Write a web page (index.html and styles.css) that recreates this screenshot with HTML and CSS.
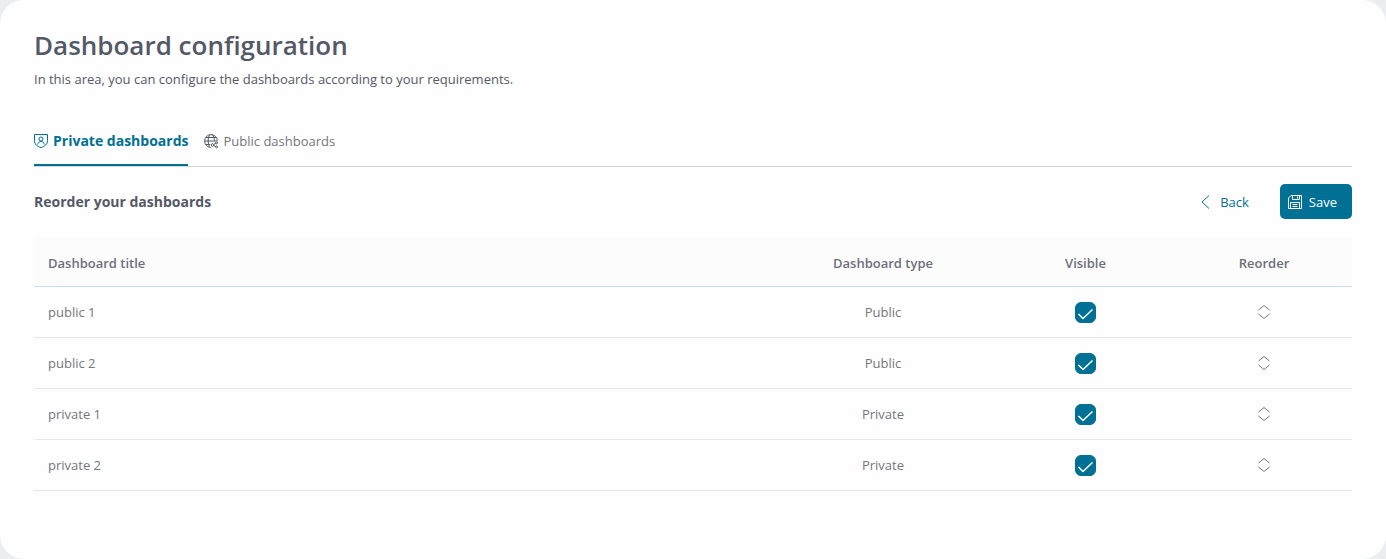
FILE: index.html
```html
<!DOCTYPE html>
<html lang="en">

<head>
    <meta charset="UTF-8">
    <meta name="viewport" content="width=device-width, initial-scale=1.0">
    <title>Dashboard configuration</title>
    <link rel="stylesheet" href="styles.css">
</head>

<body>
    <svg class="icon-defs" aria-hidden="true">
        <symbol id="icon-sort" viewBox="0 0 12 16">
            <path d="M.5 6L6 1.500l5.500 4.500M.5 10L6 14.500l5.500-4.500" />
        </symbol>
    </svg>

    <main class="panel">
        <h1>Dashboard configuration</h1>
        <p class="intro">In this area, you can configure the dashboards according to your requirements.</p>

        <nav class="tabs">
            <a href="#private" class="tab active">
                <svg class="icon" viewBox="0 0 14 14">
                    <path d="M.5.5h13v6.200c0 3.600-2.600 5.600-6.500 6.900C3.100 12.300.5 10.300.5 6.700z" />
                    <circle cx="7" cy="5" r="2" />
                    <path d="M3.700 10.500C4 8.500 5.200 7.500 7 7.500s3 1 3.300 3" />
                </svg>
                Private dashboards
            </a>
            <a href="#public" class="tab">
                <svg class="icon globe" viewBox="0 0 14 14">
                    <path d="M13.400 6.500A6.400 6.400 0 1 0 6.500 13.400" />
                    <path d="M6 .6C3.500 3 3.500 11 6.300 13.400M8 .6c1.800 1.800 2.300 3.500 2.300 5.900M1.500 3.500h11M.6 7h12.800M1.500 10.500h4.700" />
                    <circle cx="8.600" cy="11" r="1.300" />
                    <circle cx="12.600" cy="8.800" r="1" />
                    <circle cx="12.600" cy="12.800" r="1" />
                    <path d="M9.800 10.400l2-1.200M9.800 11.600l2 .9" />
                </svg>
                Public dashboards
            </a>
        </nav>

        <div class="toolbar">
            <h2>Reorder your dashboards</h2>
            <div class="actions">
                <button type="button" class="btn btn-link">
                    <svg class="icon" viewBox="0 0 14 14">
                        <path d="M10 .5L3 7l7 6.500" />
                    </svg>
                    Back
                </button>
                <button type="button" class="btn btn-primary">
                    <svg class="icon" viewBox="0 0 14 14">
                        <path d="M3 .5h10.500v13H.5V3z" />
                        <path d="M4.500.5v4h7v-4M9.500 1.500v2M2.500 13.500v-6h9v6M4.500 9.500h5M4.500 11.500h5" />
                    </svg>
                    Save
                </button>
            </div>
        </div>

        <table class="dashboards">
            <thead>
                <tr>
                    <th class="col-title">Dashboard title</th>
                    <th class="col-type">Dashboard type</th>
                    <th class="col-visible">Visible</th>
                    <th class="col-reorder">Reorder</th>
                </tr>
            </thead>
            <tbody>
                <tr>
                    <td>public 1</td>
                    <td>Public</td>
                    <td><input type="checkbox" aria-label="public 1 visible" checked></td>
                    <td><button type="button" class="sort" aria-label="Reorder public 1"><svg><use href="#icon-sort" /></svg></button></td>
                </tr>
                <tr>
                    <td>public 2</td>
                    <td>Public</td>
                    <td><input type="checkbox" aria-label="public 2 visible" checked></td>
                    <td><button type="button" class="sort" aria-label="Reorder public 2"><svg><use href="#icon-sort" /></svg></button></td>
                </tr>
                <tr>
                    <td>private 1</td>
                    <td>Private</td>
                    <td><input type="checkbox" aria-label="private 1 visible" checked></td>
                    <td><button type="button" class="sort" aria-label="Reorder private 1"><svg><use href="#icon-sort" /></svg></button></td>
                </tr>
                <tr>
                    <td>private 2</td>
                    <td>Private</td>
                    <td><input type="checkbox" aria-label="private 2 visible" checked></td>
                    <td><button type="button" class="sort" aria-label="Reorder private 2"><svg><use href="#icon-sort" /></svg></button></td>
                </tr>
            </tbody>
        </table>
    </main>
</body>

</html>
```

FILE: styles.css
```css
* {
    box-sizing: border-box;
}

body {
    margin: 0;
    background-color: #ebeef1;
    font-family: "Open Sans", "Noto Sans", sans-serif;
    font-size: 13px;
    line-height: 20px;
    color: #545966;
}

.panel {
    min-height: 100vh;
    padding: 25px 34px;
    background-color: #fefefe;
    border-radius: 24px;
}

h1 {
    margin: 0;
    font-size: 26px;
    font-weight: 600;
    line-height: 40px;
}

h2 {
    margin: 0;
    font-size: 14px;
    font-weight: 700;
}

.intro {
    margin: 4px 0 0;
}

.icon-defs {
    display: none;
}

svg {
    fill: none;
    stroke: currentColor;
}

.icon {
    flex: none;
    width: 14px;
    height: 14px;
    overflow: visible;
}

.globe {
    color: #545966;
}

/* Tabs */
.tabs {
    display: flex;
    gap: 16px;
    margin-top: 28px;
    border-bottom: 1px solid #d4d5d7;
}

.tab {
    display: flex;
    align-items: center;
    gap: 5px;
    padding: 14px 0 13px;
    border-bottom: 2px solid transparent;
    color: #75777c;
    text-decoration: none;
}

.tab.active {
    border-color: #007094;
    color: #007094;
    font-size: 14px;
    font-weight: 700;
}

/* Title and buttons above the table */
.toolbar {
    display: flex;
    align-items: center;
    justify-content: space-between;
    margin: 17px 0 18px;
}

.actions {
    display: flex;
    gap: 16px;
}

.btn {
    display: flex;
    align-items: center;
    gap: 7px;
    height: 35px;
    padding: 0 15px 0 8px;
    border: 0;
    border-radius: 5px;
    background: none;
    font: inherit;
    cursor: pointer;
}

.btn-link {
    color: #007094;
}

.btn-primary {
    background-color: #007094;
    color: #fff;
}

/* Table */
.dashboards {
    width: 100%;
    table-layout: fixed;
    border-collapse: separate;
    border-spacing: 0;
}

.dashboards th,
.dashboards td {
    height: 51px;
    padding: 0 14px;
    border-bottom: 1px solid #e6e8ea;
    text-align: center;
}

.dashboards th {
    height: 50px;
    padding-top: 2px;
    border-color: #c5e0ea;
    background-color: #fcfcfc;
    color: #6c707b;
    font-weight: 600;
}

.dashboards td {
    color: #75777c;
}

.dashboards th:first-child,
.dashboards td:first-child {
    text-align: left;
}

.col-type {
    width: 224px;
}

.col-visible {
    width: 181px;
}

.col-reorder {
    width: 176px;
}

input[type="checkbox"] {
    display: block;
    width: 21px;
    height: 21px;
    margin: 0 auto;
    appearance: none;
    border-radius: 6px;
    border: 1px solid #007094;
}

/* Tick mark drawn over the filled box */
input[type="checkbox"]:checked {
    background: #007094 url("data:image/svg+xml,%3Csvg xmlns='http://www.w3.org/2000/svg' viewBox='0 0 21 21'%3E%3Cpath d='M3.500 12l4.500 4.500L17.500 7.500' fill='none' stroke='white' stroke-width='1.500'/%3E%3C/svg%3E") center / 21px 21px no-repeat;
}

.sort {
    display: block;
    margin: 0 auto;
    padding: 0;
    border: 0;
    background: none;
    color: #75777c;
    cursor: pointer;
}

.sort svg {
    display: block;
    width: 12px;
    height: 16px;
}
```
